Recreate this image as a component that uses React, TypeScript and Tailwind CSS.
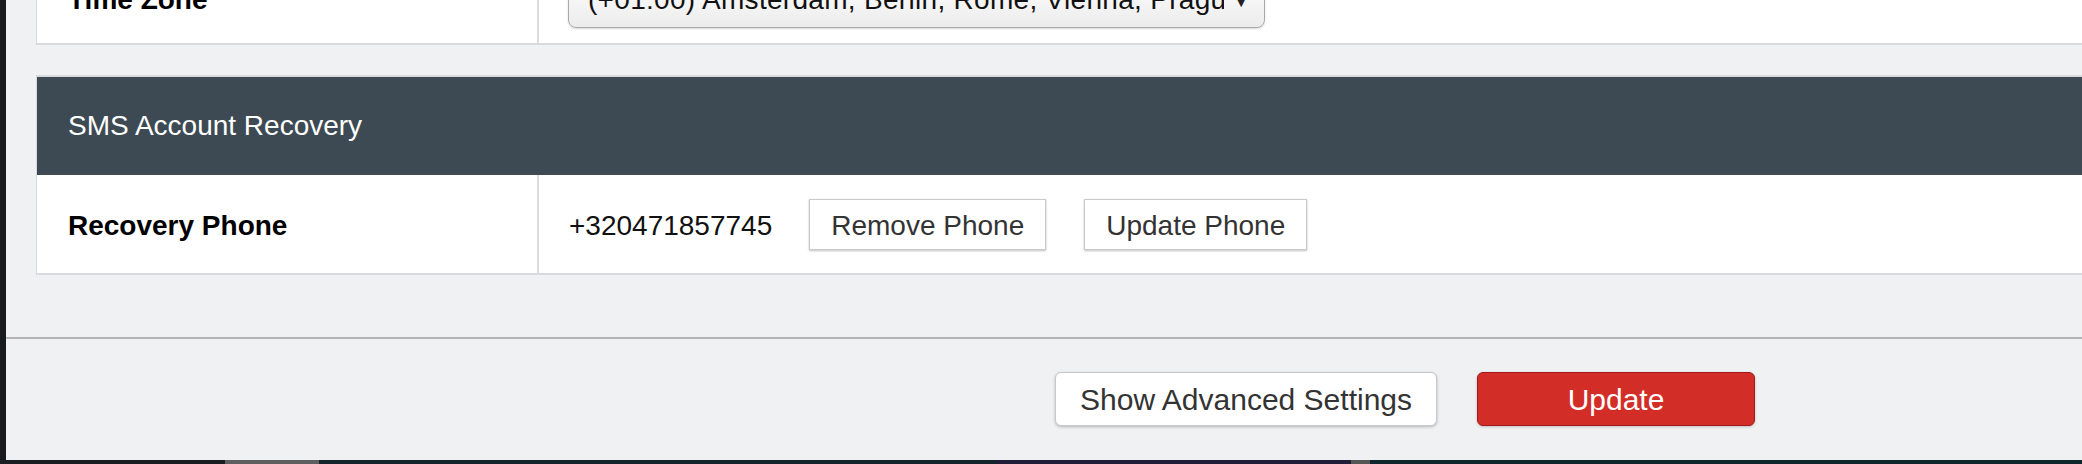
export default function App() {
  return (
    <div className="w-[2082px] h-[464px] overflow-hidden bg-[#15191d] flex flex-col font-['Liberation_Sans',Arial,Helvetica,sans-serif]">
      <div className="flex h-[460px] shrink-0">
        <div className="w-[6px] bg-[#161a1e]" />
        <div className="flex-1 bg-[#f0f1f3] flex flex-col overflow-hidden">
          <div className="pl-[30px] flex flex-col">
            {/* Top card (partially scrolled out) */}
            <div className="mt-[-55px] h-[100px] pt-[12px] bg-white border-l border-b-2 border-[#d9dadc] flex">
              <div className="w-[502px] shrink-0 border-r-2 border-[#dcdcdc] flex items-center pl-[31px]">
                <span className="text-[28px] font-bold text-black">Time Zone</span>
              </div>
              <div className="flex-1 flex items-center pl-[29px]">
                <div className="w-[697px] h-[56px] rounded-[8px] border border-[#a9a9a9] bg-linear-to-b from-white to-[#ececec] shadow-[0_1px_2px_rgba(0,0,0,0.15)] pl-[19px] pr-[12px] flex items-center">
                  <span className="flex-1 overflow-hidden whitespace-nowrap text-[28px] text-[#111] tracking-[0.3px]">
                    (+01:00) Amsterdam, Berlin, Rome, Vienna, Prague
                  </span>
                  <span className="text-[22px] leading-none text-[#222] pl-[6px]">▼</span>
                </div>
              </div>
            </div>

            {/* SMS Account Recovery card */}
            <div className="mt-[30px] bg-white border-l border-t-2 border-b-2 border-[#d8dadd] flex flex-col">
              <div className="h-[98px] bg-[#3d4a53] flex items-center pl-[31px]">
                <span className="text-[28px] text-white">SMS Account Recovery</span>
              </div>
              <div className="h-[98px] flex">
                <div className="w-[502px] shrink-0 border-r-2 border-[#dcdcdc] flex items-center pl-[31px] pt-[3px]">
                  <span className="text-[28px] font-bold text-black">Recovery Phone</span>
                </div>
                <div className="flex-1 flex items-center pl-[30px] gap-[37px]">
                  <span className="text-[28px] text-[#111] pt-[3px]">+320471857745</span>
                  <div className="flex items-center gap-[38px]">
                    <button className="h-[51px] px-[21px] pt-[3px] bg-white border border-[#c9c9c9] shadow-[0_1px_2px_rgba(0,0,0,0.25)] text-[28px] text-[#333]">
                      Remove Phone
                    </button>
                    <button className="h-[51px] px-[21px] pt-[3px] bg-white border border-[#c9c9c9] shadow-[0_1px_2px_rgba(0,0,0,0.25)] text-[28px] text-[#333]">
                      Update Phone
                    </button>
                  </div>
                </div>
              </div>
            </div>
          </div>

          {/* Footer */}
          <div className="mt-[62px] border-t-2 border-[#b4b4b4] pt-[33px] flex justify-end pr-[327px] gap-[40px]">
            <button className="h-[54px] px-[24px] bg-white border border-[#c8c8c8] rounded-[6px] shadow-[0_1px_3px_rgba(0,0,0,0.25)] text-[30px] text-[#333]">
              Show Advanced Settings
            </button>
            <button className="h-[54px] w-[278px] bg-[#d32d27] border border-[#a3191b] rounded-[6px] shadow-[0_1px_3px_rgba(0,0,0,0.2)] text-[30px] text-white">
              Update
            </button>
          </div>
        </div>
      </div>
      <div className="flex h-[4px] shrink-0">
        <div className="w-[225px] bg-[#1a1e23]" />
        <div className="w-[94px] bg-[#5f5f60]" />
        <div className="w-[677px] bg-[#12252b]" />
        <div className="w-[355px] bg-[#1f1c38]" />
        <div className="w-[19px] bg-[#555555]" />
        <div className="flex-1 bg-[#0f262c]" />
      </div>
    </div>
  );
}
